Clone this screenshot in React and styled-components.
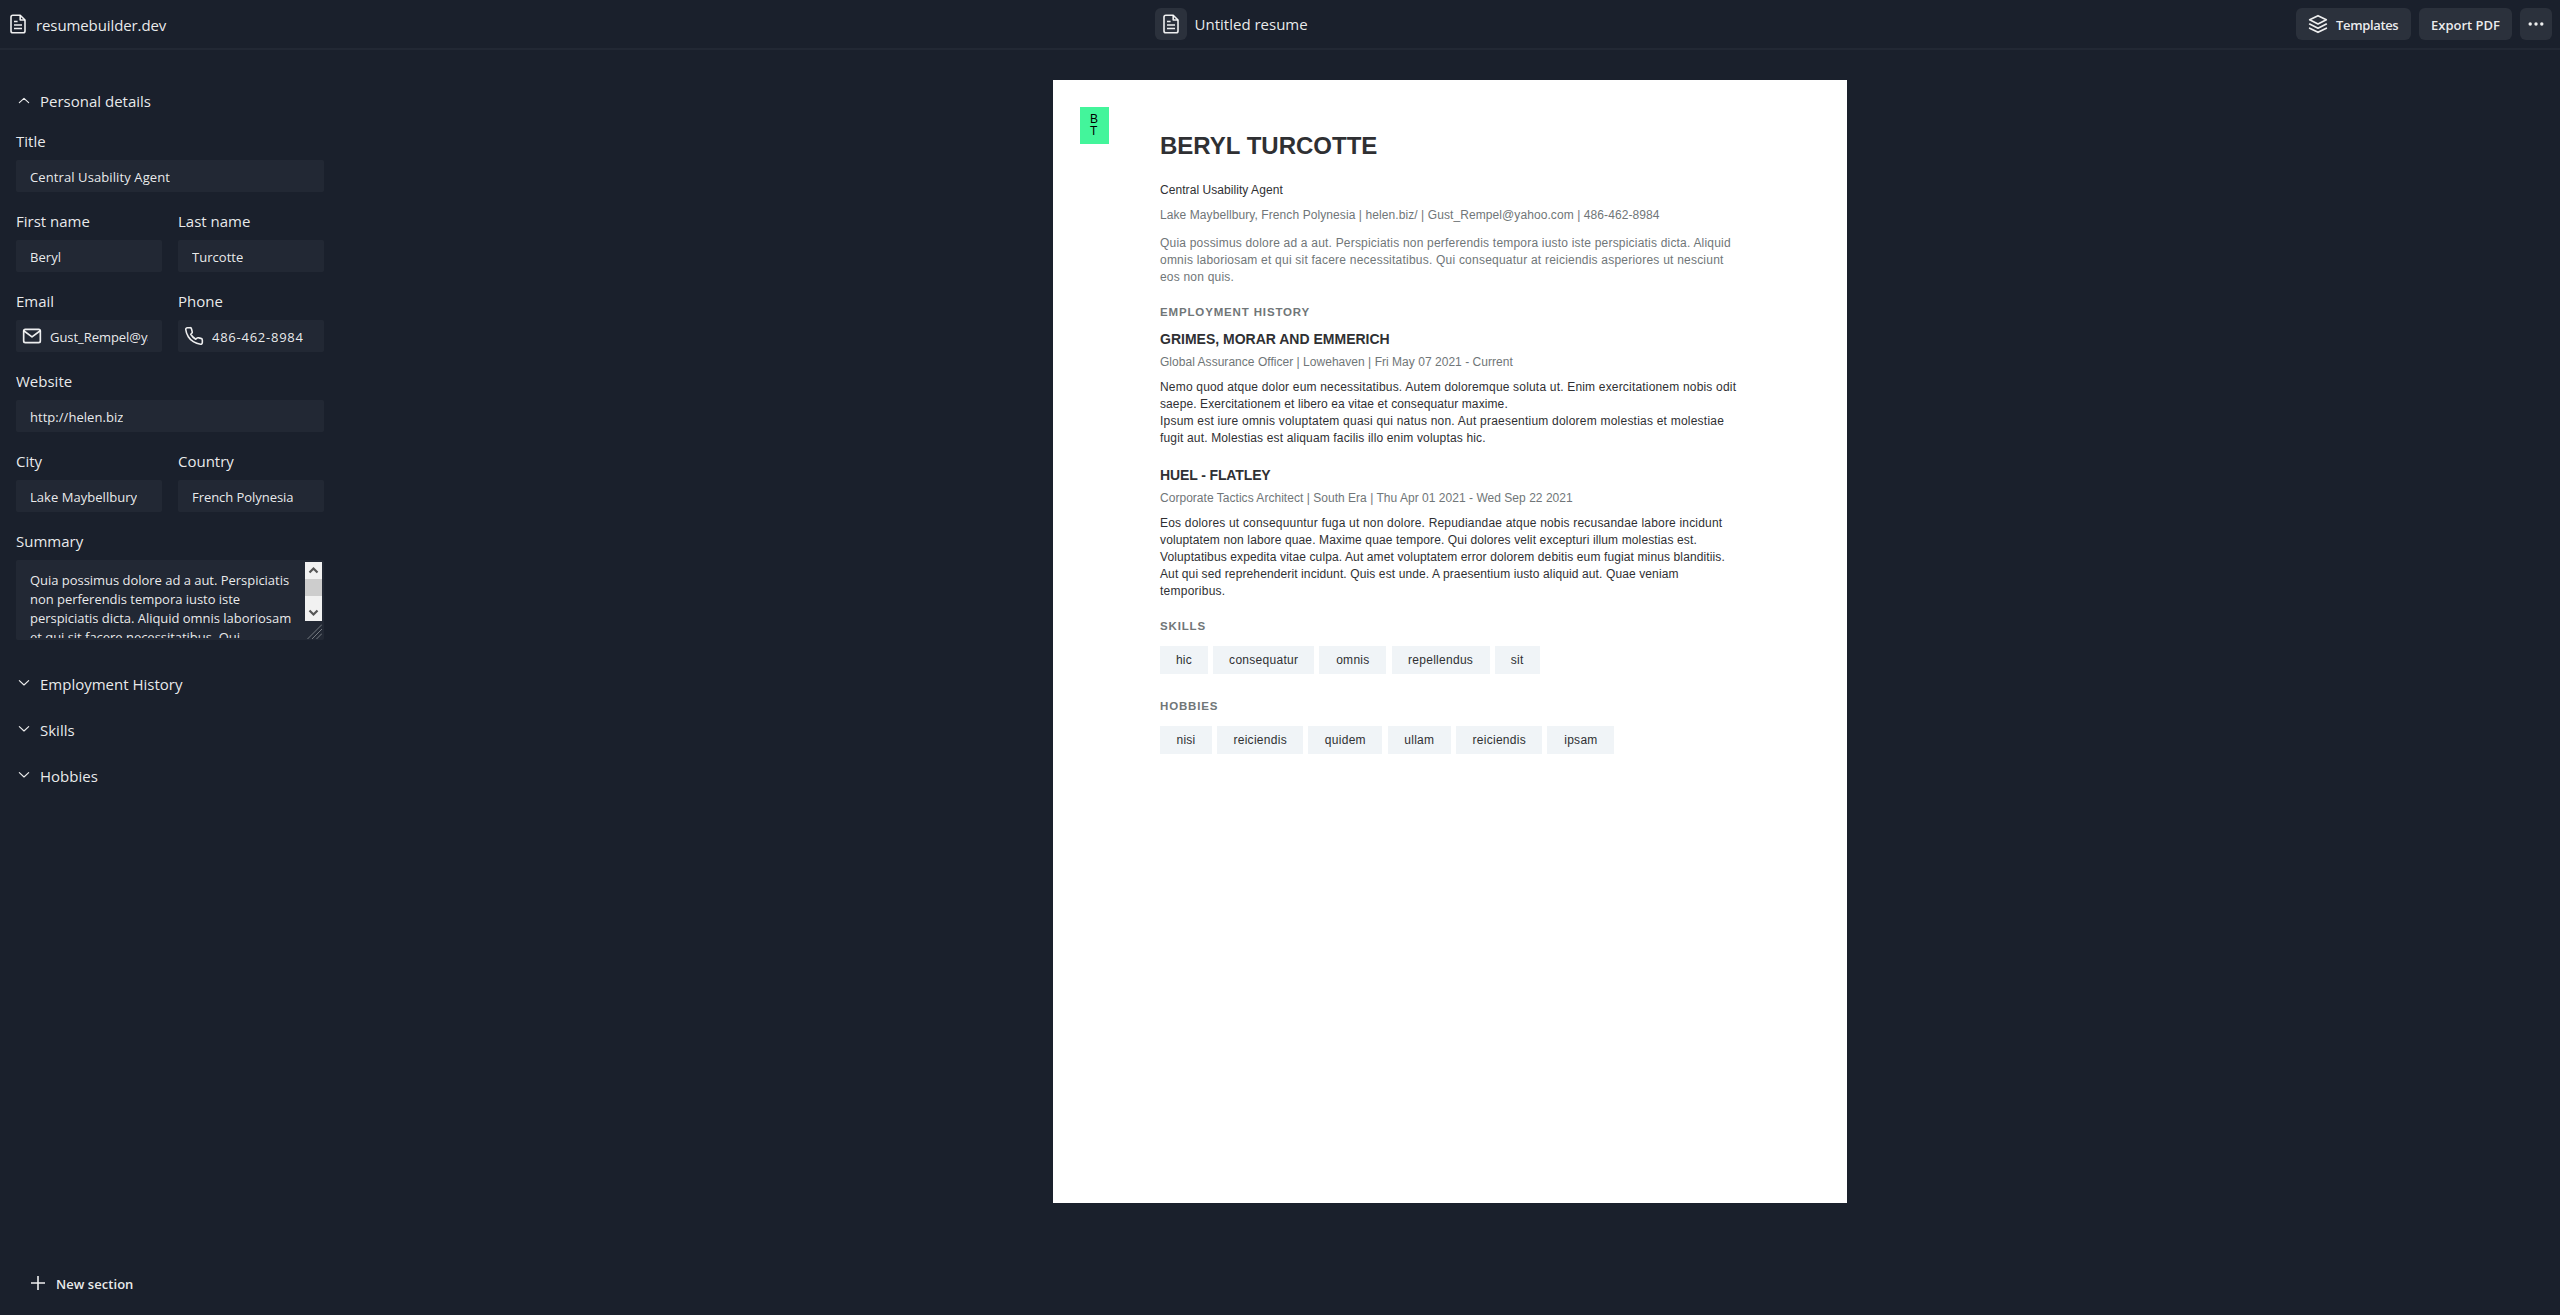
import React from 'react';
import styled, { createGlobalStyle } from 'styled-components';

const GlobalStyle = createGlobalStyle`
  * { box-sizing: border-box; }
  body { margin: 0; background: #1a202c; }
  p, h1, h2, h3, h4 { margin: 0; font-weight: 400; }
`;

const Page = styled.div`
  display: flex;
  flex-direction: column;
  height: 1315px;
  overflow: hidden;
  background: #1a202c;
  color: rgba(255, 255, 255, 0.92);
  font-family: 'Open Sans', sans-serif;
  font-size: 15px;
  line-height: 24px;
`;

const TopBar = styled.header`
  display: flex;
  justify-content: space-between;
  align-items: center;
  height: 50px;
  flex: none;
  padding: 0 8px;
  border-bottom: 2px solid rgba(255, 255, 255, 0.04);
`;

const Brand = styled.div`
  display: flex;
  align-items: center;
  gap: 8px;
  span { padding-top: 2px; }
`;

const Label = styled.span`
  display: inline-block;
  white-space: nowrap;
  font-size: 15px;
  line-height: 24px;
  letter-spacing: ${(p) => p.$track || '0'};
`;

const DocTitle = styled.div`
  display: flex;
  align-items: center;
  gap: 8px;
`;

const Actions = styled.div`
  display: flex;
  justify-content: flex-end;
  gap: 8px;
`;

const Button = styled.button`
  display: flex;
  align-items: center;
  justify-content: ${(p) => (p.$start ? 'flex-start' : 'center')};
  gap: ${(p) => p.$gap || 8}px;
  height: 32px;
  width: ${(p) => p.$width}px;
  padding: 0 0 0 ${(p) => p.$start || 0}px;
  border: 0;
  border-radius: 6px;
  background: ${(p) => (p.$ghost ? 'transparent' : 'rgba(255, 255, 255, 0.08)')};
  color: inherit;
  font: 600 13px/20px 'Open Sans', sans-serif;
  letter-spacing: ${(p) => p.$track || '0'};
  white-space: nowrap;
  span { padding-top: 1px; }
`;

const Body = styled.div`
  display: flex;
  flex: 1;
  min-height: 0;
`;

const Sidebar = styled.aside`
  display: flex;
  flex-direction: column;
  justify-content: space-between;
  width: 340px;
  flex: none;
  padding: 39px 16px 16px;
`;

const SectionHead = styled.div`
  display: flex;
  align-items: center;
  gap: 8px;
  height: 24px;
  margin-bottom: ${(p) => p.$gap}px;
`;

const Fields = styled.div`
  display: grid;
  grid-template-columns: 146px 146px;
  gap: 16px;
  margin-bottom: 32px;
`;

const Field = styled.label`
  display: flex;
  flex-direction: column;
  gap: 7px;
  padding-top: 1px;
  grid-column: ${(p) => (p.$wide ? 'span 2' : 'auto')};
`;

const Input = styled.div`
  display: flex;
  align-items: center;
  gap: 8px;
  height: 32px;
  padding: 2px 14px 0 ${(p) => (p.$icon ? 6 : 14)}px;
  border-radius: 2px;
  background: rgba(255, 255, 255, 0.04);
  font-size: 13px;
  line-height: 20px;
  svg { flex: none; margin-top: -2px; }
`;

const InputText = styled.span`
  overflow: hidden;
  white-space: nowrap;
  letter-spacing: ${(p) => p.$track || '0.04px'};
`;

const TextArea = styled.div`
  display: flex;
  justify-content: space-between;
  height: 80px;
  padding: 2px;
  border-radius: 2px;
  background: rgba(255, 255, 255, 0.04);
`;

const TextAreaBody = styled.div`
  height: 76px;
  overflow: hidden;
  padding: 8.600px 0 0 12px;
  font-size: 13px;
  line-height: 19.250px;
  letter-spacing: -0.030px;
  white-space: nowrap;
`;

const ScrollColumn = styled.div`
  width: 17px;
  flex: none;
`;

const ScrollTrack = styled.div`
  display: flex;
  flex-direction: column;
  height: 59px;
  background: #f1f1f1;
`;

const ScrollButton = styled.div`
  display: flex;
  height: 17px;
`;

const ScrollThumb = styled.div`
  height: 17px;
  margin-bottom: 8px;
  background: #cdcdcd;
`;

const Stage = styled.main`
  display: flex;
  flex: 1;
  padding: 30px 0 0 713px;
`;

const Paper = styled.article`
  display: flex;
  width: 794px;
  height: 1123px;
  background: #fff;
  font-family: 'Liberation Sans', Arial, sans-serif;
  font-size: 12px;
  line-height: 17px;
  color: #2f3033;
`;

const Margin = styled.div`
  width: 107px;
  flex: none;
  padding: 27px 0 0 27px;
`;

const Monogram = styled.div`
  display: flex;
  flex-direction: column;
  width: 29px;
  height: 37px;
  padding: 6px 0 0 10px;
  background: #43f59b;
  color: #000;
  font-size: 12px;
  line-height: 12px;
`;

const Sheet = styled.div`
  width: 600px;
  padding-top: 52px;
  white-space: nowrap;
`;

const Name = styled.h1`
  font-size: 24px;
  line-height: 28px;
  font-weight: 700;
  margin-bottom: 21.5px;
`;

const Line = styled.p`
  color: ${(p) => (p.$muted ? '#707678' : 'inherit')};
  letter-spacing: ${(p) => p.$track || 0}px;
  margin-bottom: ${(p) => p.$gap || 0}px;
`;

const Heading = styled.h2`
  color: #707678;
  font-weight: 700;
  font-size: 11.5px;
  line-height: 14px;
  letter-spacing: 0.85px;
  margin-bottom: ${(p) => p.$gap}px;
`;

const Company = styled.h3`
  font-size: 14px;
  line-height: 17px;
  font-weight: 700;
  letter-spacing: ${(p) => p.$track || 0}px;
  margin-bottom: 6px;
`;

const Tags = styled.div`
  display: flex;
  gap: 5.2px;
  margin-bottom: ${(p) => p.$gap || 0}px;
`;

const Tag = styled.span`
  width: ${(p) => p.$width}px;
  height: 28px;
  background: #f0f4f7;
  line-height: 28px;
  letter-spacing: 0.28px;
  text-align: center;
`;

const Feather = ({ size = 20, width = 2, children }) => (
  <svg width={size} height={size} viewBox="0 0 24 24" fill="none" stroke="currentColor"
    strokeWidth={width} strokeLinecap="round" strokeLinejoin="round">{children}</svg>
);

const FileIcon = () => (
  <svg width="20" height="20" viewBox="0 0 20 20" fill="none" stroke="currentColor"
    strokeWidth="1.6" strokeLinejoin="round">
    <path d="M12.2 1.200H4.800A1.800 1.800 0 0 0 3 3V17a1.800 1.800 0 0 0 1.800 1.800h10.400A1.800 1.800 0 0 0 17 17V6z" />
    <path d="M12.200 1.200v4.800H17" />
    <path d="M6 7.500h3.600M6 11h8M6 14.500h8" strokeWidth="1.400" />
  </svg>
);

const Chevron = ({ up }) => (
  <Feather size={16} width={1.7}><path d={up ? 'M5 14.500l7-6.500 7 6.500' : 'M5 7l7 6.500 7-6.500'} /></Feather>
);

const MailIcon = () => (
  <Feather width={2}><rect x="2" y="4" width="20" height="16" rx="2" /><path d="M2.500 6l9.500 7 9.500-7" /></Feather>
);

const PhoneIcon = () => (
  <Feather width={1.9}><path d="M22 16.920v3a2 2 0 0 1-2.180 2 19.790 19.790 0 0 1-8.630-3.070 19.500 19.500 0 0 1-6-6A19.790 19.790 0 0 1 2.120 4.180 2 2 0 0 1 4.110 2h3a2 2 0 0 1 2 1.720c.127.960.361 1.903.700 2.810a2 2 0 0 1-.450 2.110L8.090 9.910a16 16 0 0 0 6 6l1.270-1.270a2 2 0 0 1 2.110-.450c.907.339 1.850.573 2.810.700A2 2 0 0 1 22 16.920z" /></Feather>
);

const LayersIcon = () => (
  <Feather width={2}><path d="M12 2L2 7l10 5 10-5-10-5z" /><path d="M2 12l10 5 10-5" /><path d="M2 17l10 5 10-5" /></Feather>
);

const DotsIcon = () => (
  <svg width="20" height="20" viewBox="0 0 20 20" fill="currentColor">
    <circle cx="4.200" cy="10" r="1.700" /><circle cx="10" cy="10" r="1.700" /><circle cx="15.800" cy="10" r="1.700" />
  </svg>
);

const PlusIcon = () => (
  <svg width="16" height="16" viewBox="0 0 16 16" fill="none" stroke="currentColor" strokeWidth="1.600">
    <path d="M8 1v14M1 8h14" />
  </svg>
);

const Arrow = ({ up }) => (
  <svg width="17" height="17" viewBox="0 0 17 17" fill="none" stroke="#555" strokeWidth="2.200">
    <path d={up ? 'M4.500 10.500l4-4 4 4' : 'M4.500 6.500l4 4 4-4'} />
  </svg>
);

const Grip = () => (
  <svg width="17" height="17" viewBox="0 0 17 17" fill="none" stroke="#80848b" strokeWidth="0.900">
    <path d="M2.500 17L17 2.500M7 17L17 7M11.500 17l5.500-5.500" />
  </svg>
);

const SUMMARY = [
  'Quia possimus dolore ad a aut. Perspiciatis',
  'non perferendis tempora iusto iste',
  'perspiciatis dicta. Aliquid omnis laboriosam',
  'et qui sit facere necessitatibus. Qui',
];

const TextField = ({ label, value, wide, icon, track }) => (
  <Field $wide={wide}>
    <Label>{label}</Label>
    <Input $icon={!!icon}>{icon}<InputText $track={track}>{value}</InputText></Input>
  </Field>
);

const SKILLS = [['hic', 48], ['consequatur', 101], ['omnis', 67], ['repellendus', 98], ['sit', 45]];
const HOBBIES = [['nisi', 52], ['reiciendis', 86], ['quidem', 74], ['ullam', 63.5], ['reiciendis', 86], ['ipsam', 67]];

export default function App() {
  return (
    <Page>
      <GlobalStyle />
      <TopBar>
        <Brand><FileIcon /><Label $track="-0.1px">resumebuilder.dev</Label></Brand>
        <DocTitle><Button $width={32}><FileIcon /></Button><Label>Untitled resume</Label></DocTitle>
        <Actions>
          <Button $width={115} $start={12} $track="-0.35px"><LayersIcon /><span>Templates</span></Button>
          <Button $width={93}><span>Export PDF</span></Button>
          <Button $width={32}><DotsIcon /></Button>
        </Actions>
      </TopBar>
      <Body>
        <Sidebar>
          <div>
            <SectionHead $gap={15}><Chevron up /><Label>Personal details</Label></SectionHead>
            <Fields>
              <TextField wide label="Title" value="Central Usability Agent" track="0.1px" />
              <TextField label="First name" value="Beryl" />
              <TextField label="Last name" value="Turcotte" />
              <TextField label="Email" value="Gust_Rempel@yahoo.com" icon={<MailIcon />} track="-0.05px" />
              <TextField label="Phone" value="486-462-8984" icon={<PhoneIcon />} track="0.75px" />
              <TextField wide label="Website" value="http://helen.biz" />
              <TextField label="City" value="Lake Maybellbury" />
              <TextField label="Country" value="French Polynesia" track="-0.05px" />
              <Field as="div" $wide>
                <Label>Summary</Label>
                <TextArea>
                  <TextAreaBody>{SUMMARY.map((l) => <div key={l}>{l}</div>)}</TextAreaBody>
                  <ScrollColumn>
                    <ScrollTrack>
                      <ScrollButton><Arrow up /></ScrollButton>
                      <ScrollThumb />
                      <ScrollButton><Arrow /></ScrollButton>
                    </ScrollTrack>
                    <Grip />
                  </ScrollColumn>
                </TextArea>
              </Field>
            </Fields>
            <SectionHead $gap={22}><Chevron /><Label>Employment History</Label></SectionHead>
            <SectionHead $gap={22}><Chevron /><Label>Skills</Label></SectionHead>
            <SectionHead $gap={22}><Chevron /><Label>Hobbies</Label></SectionHead>
          </div>
          <Button $ghost $width={132} $start={14} $gap={10} $track="0.05px"><PlusIcon /><span>New section</span></Button>
        </Sidebar>
        <Stage>
          <Paper>
            <Margin><Monogram><span>B</span><span>T</span></Monogram></Margin>
            <Sheet>
              <Name>BERYL TURCOTTE</Name>
              <Line $gap={8} $track={0.06}>Central Usability Agent</Line>
              <Line $muted $gap={11} $track={0.085}>Lake Maybellbury, French Polynesia | helen.biz/ | Gust_Rempel@yahoo.com | 486-462-8984</Line>
              <Line $muted $track={0.2}>Quia possimus dolore ad a aut. Perspiciatis non perferendis tempora iusto iste perspiciatis dicta. Aliquid</Line>
              <Line $muted $track={0.22}>omnis laboriosam et qui sit facere necessitatibus. Qui consequatur at reiciendis asperiores ut nesciunt</Line>
              <Line $muted $gap={19.5} $track={0.2}>eos non quis.</Line>
              <Heading $gap={11.5}>EMPLOYMENT HISTORY</Heading>
              <Company>GRIMES, MORAR AND EMMERICH</Company>
              <Line $muted $gap={8} $track={0.03}>Global Assurance Officer | Lowehaven | Fri May 07 2021 - Current</Line>
              <Line $track={0.185}>Nemo quod atque dolor eum necessitatibus. Autem doloremque soluta ut. Enim exercitationem nobis odit</Line>
              <Line $track={0.1}>saepe. Exercitationem et libero ea vitae et consequatur maxime.</Line>
              <Line $track={0.22}>Ipsum est iure omnis voluptatem quasi qui natus non. Aut praesentium dolorem molestias et molestiae</Line>
              <Line $gap={20} $track={0.16}>fugit aut. Molestias est aliquam facilis illo enim voluptas hic.</Line>
              <Company $track={-0.12}>HUEL - FLATLEY</Company>
              <Line $muted $gap={8} $track={0.03}>Corporate Tactics Architect | South Era | Thu Apr 01 2021 - Wed Sep 22 2021</Line>
              <Line $track={0.19}>Eos dolores ut consequuntur fuga ut non dolore. Repudiandae atque nobis recusandae labore incidunt</Line>
              <Line $track={0.13}>voluptatem non labore quae. Maxime quae tempore. Qui dolores velit excepturi illum molestias est.</Line>
              <Line $track={0.12}>Voluptatibus expedita vitae culpa. Aut amet voluptatem error dolorem debitis eum fugiat minus blanditiis.</Line>
              <Line $track={0.115}>Aut qui sed reprehenderit incidunt. Quis est unde. A praesentium iusto aliquid aut. Quae veniam</Line>
              <Line $gap={19.5} $track={0.25}>temporibus.</Line>
              <Heading $gap={13}>SKILLS</Heading>
              <Tags $gap={25}>{SKILLS.map(([t, w]) => <Tag key={t} $width={w}>{t}</Tag>)}</Tags>
              <Heading $gap={13}>HOBBIES</Heading>
              <Tags>{HOBBIES.map(([t, w], i) => <Tag key={i} $width={w}>{t}</Tag>)}</Tags>
            </Sheet>
          </Paper>
        </Stage>
      </Body>
    </Page>
  );
}
